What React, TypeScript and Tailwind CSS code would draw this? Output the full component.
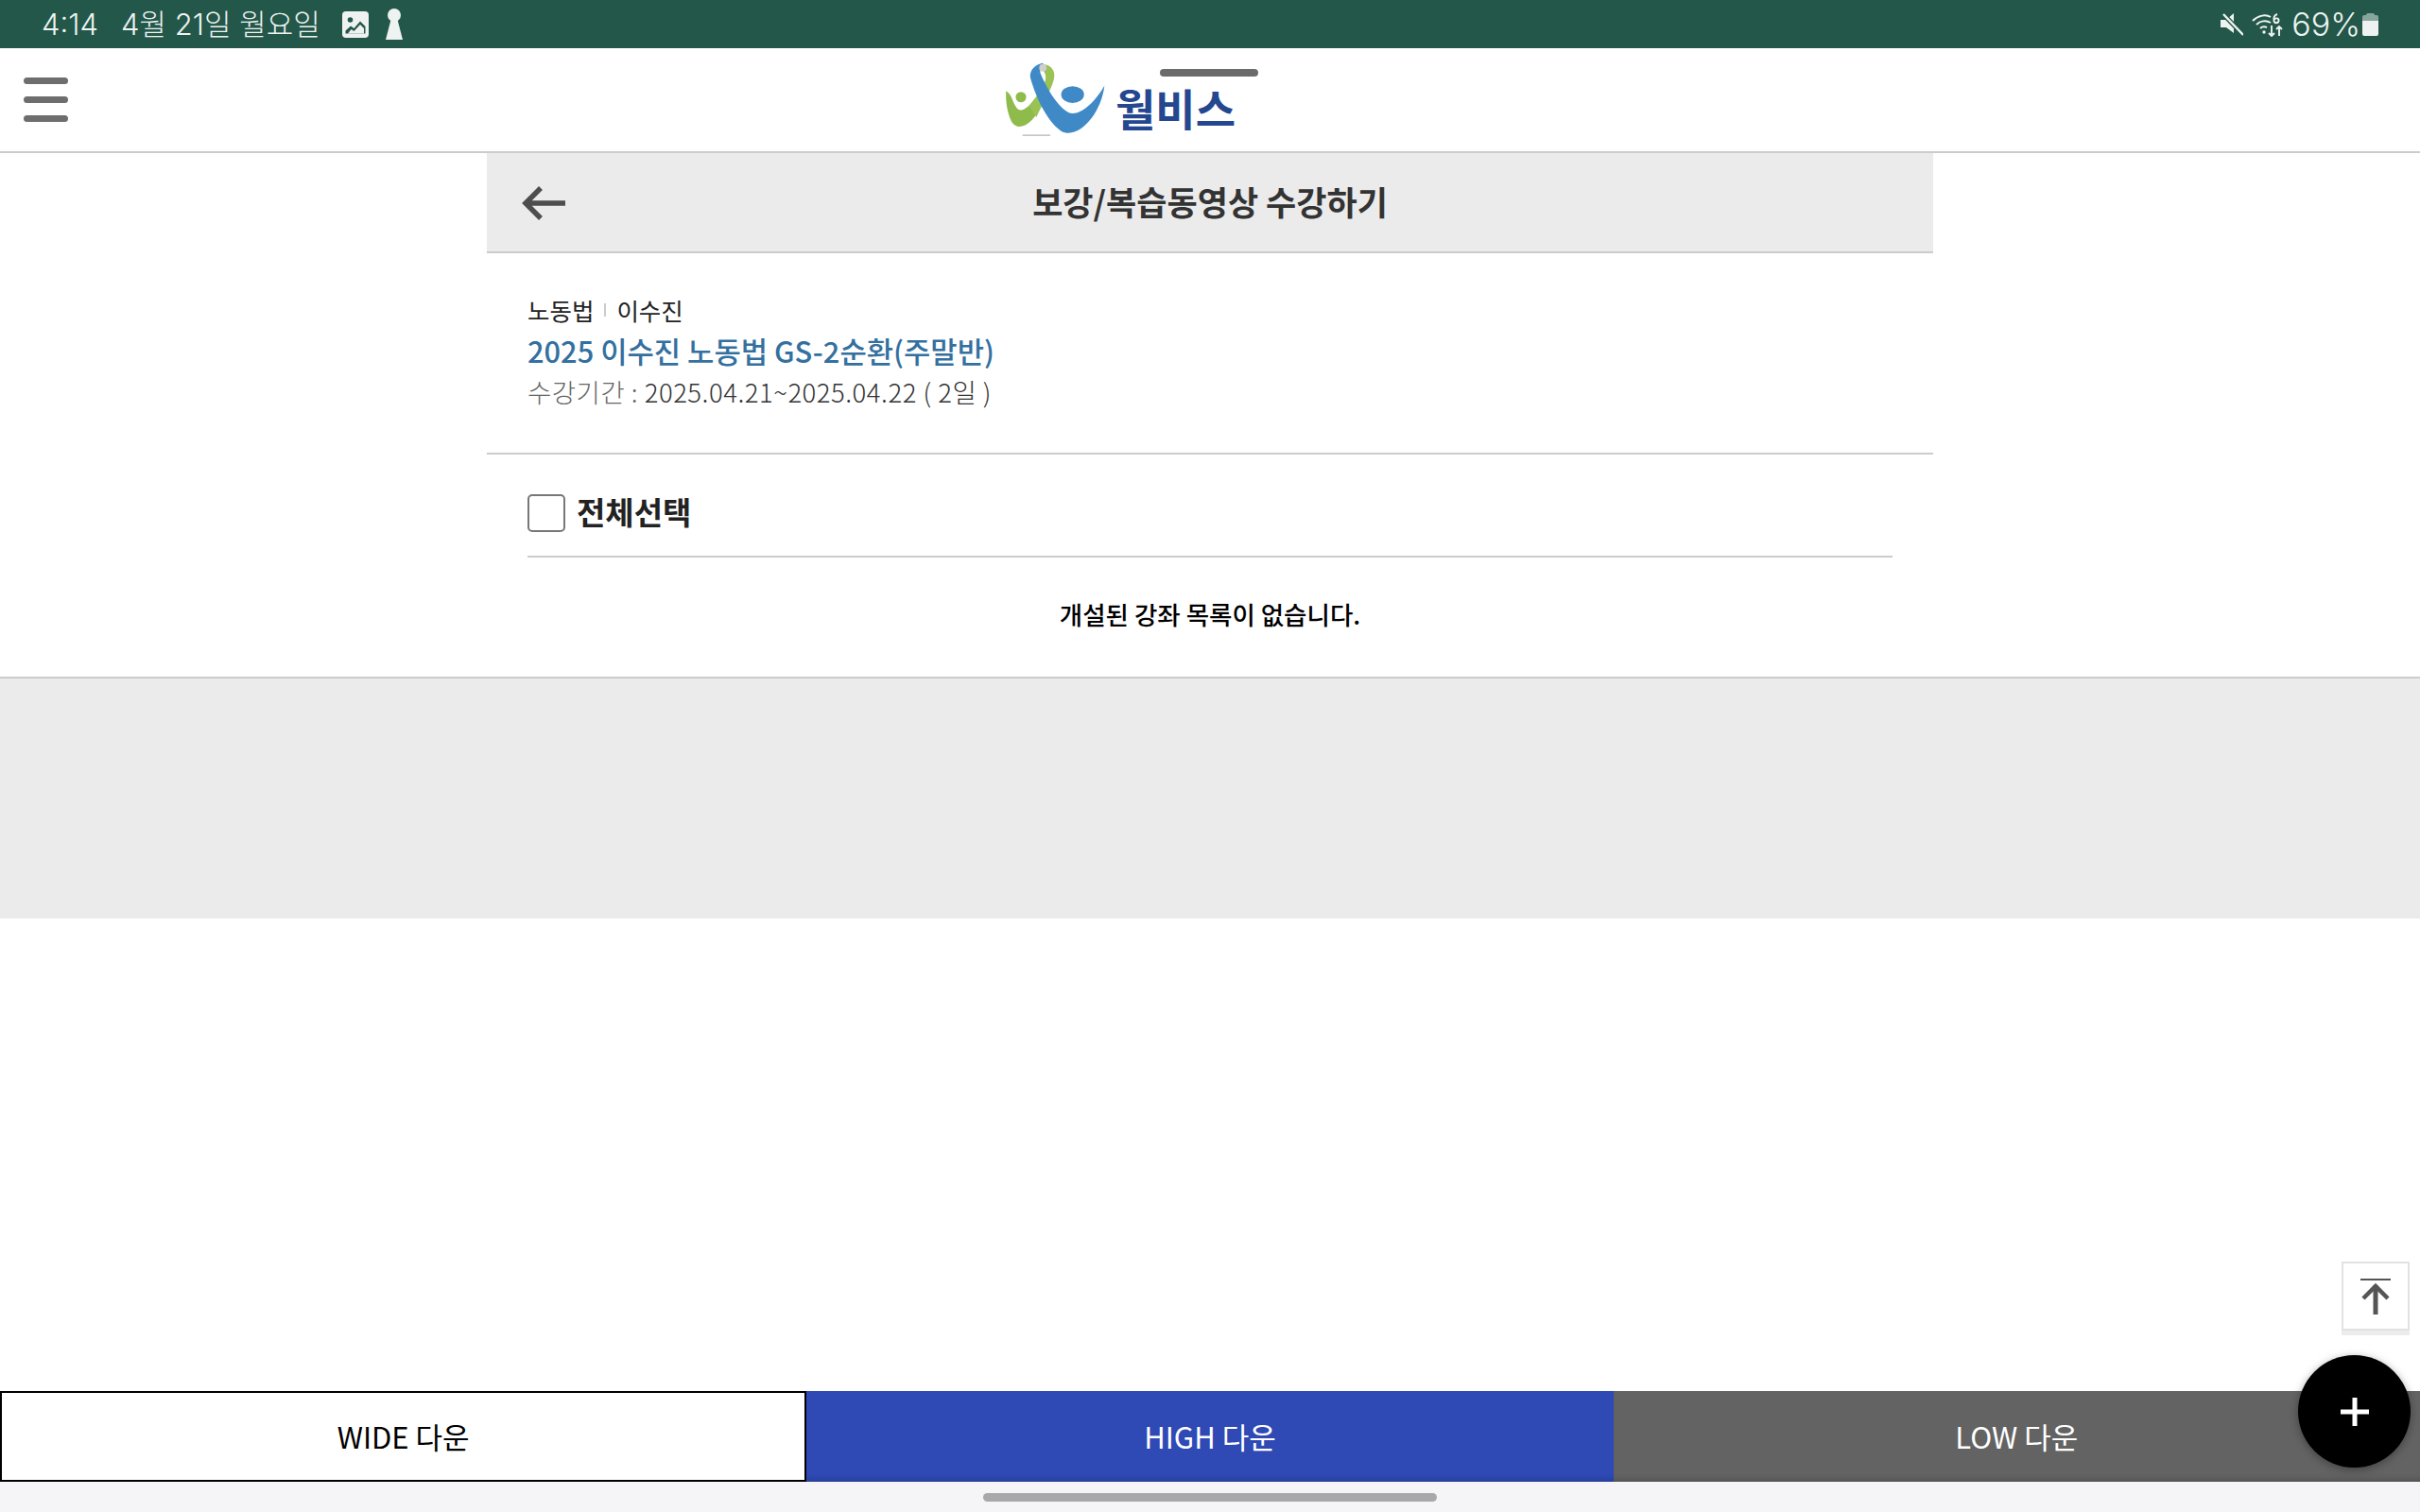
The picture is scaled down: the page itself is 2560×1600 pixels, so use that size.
const kr = "font-['Noto_Sans_CJK_KR',_sans-serif]";

function StatusBar() {
  return (
    <div className="flex h-[51px] items-center bg-[#235749] pl-[44px] pr-[44px] text-[#eef3f1]">
      <span className="font-['Inter',_'Noto_Sans_CJK_KR',_sans-serif] text-[31px] font-light leading-none">4:14</span>
      <span className="ml-[24px] font-['Inter',_'Noto_Sans_CJK_KR',_sans-serif] text-[31px] font-light leading-none">4월 21일 월요일</span>
      {/* gallery */}
      <svg className="ml-[23px]" width="28" height="28" viewBox="0 0 28 28">
        <rect width="28" height="28" rx="4" fill="#eef3f1" />
        <circle cx="8.5" cy="9" r="2.8" fill="#235749" />
        <path d="M3.5 23.5V20.5L9 15.5L12.5 18L19 10.5L24.5 16V23.5Z" fill="#235749" />
        <path d="M6 23.5L9.5 19L12.5 21L19 14L23 18V23.5Z" fill="#eef3f1" />
      </svg>
      {/* keyhole */}
      <svg className="ml-[18px]" width="18" height="33" viewBox="0 0 18 33">
        <circle cx="9" cy="7" r="7" fill="#eef3f1" />
        <path d="M6 10H12L18 33H0Z" fill="#eef3f1" />
      </svg>
      <div className="ml-auto flex items-center">
        {/* mute */}
        <svg width="24" height="24" viewBox="0 0 24 24">
          <path d="M0 7H6L14 0V21L6 15H0Z" fill="#eef3f1" />
          <path d="M2 0L24 23" stroke="#235749" strokeWidth="5" />
          <path d="M3 1L24 23" stroke="#eef3f1" strokeWidth="2.4" />
        </svg>
        {/* wifi with 6 and arrows */}
        <svg className="ml-[9px]" width="33" height="26" viewBox="0 0 33 26" fill="none" stroke="#eef3f1" strokeWidth="2">
          <path d="M1 9C7 3 15 2 20 5" />
          <path d="M5 13C9 9 15 8 20 11" />
          <path d="M9 17C11 15 14 15 16 16" />
          <circle cx="13" cy="21" r="1.7" fill="#eef3f1" stroke="none" />
          <path d="M21 14V25M18 22L21 25L24 22M29 25V15M26 18L29 15L32 18" strokeWidth="1.9" />
          <path d="M27 2C24 3 23 6 23.5 9C24 12 28 12 28.5 9C29 6 25 5.5 23.5 8" strokeWidth="1.9" />
        </svg>
        <span className="ml-[9px] font-['Inter',_sans-serif] text-[34px] font-light leading-none">69%</span>
        <div className="ml-[2px] flex h-[24px] w-[17px] flex-col items-center">
          <div className="h-[2px] w-[9px] rounded-t-sm bg-[#eef3f1]/50" />
          <div className="h-[6px] w-full rounded-t-[2px] bg-[#eef3f1]/50" />
          <div className="w-full flex-1 rounded-b-[2px] bg-[#eef3f1]" />
        </div>
      </div>
    </div>
  );
}

function Logo() {
  return (
    <div className="ml-[990px] flex items-center">
      <svg width="108" height="82" viewBox="90 70 330 250">
        <path d="M97 165C115 175 118 200 128 215C140 240 165 225 190 190L205 225C175 280 135 295 115 265C100 235 95 195 97 165Z" fill="#8fbb4d" />
        <path d="M212 78C240 78 258 98 252 125C245 160 215 205 195 250L172 215C195 180 225 150 225 120C225 105 215 95 205 90Z" fill="#9ac254" />
        <path d="M215 75C190 80 170 100 176 125C190 175 225 260 275 295C330 325 405 240 415 148C395 185 350 240 310 238C270 232 225 150 208 108C205 98 210 85 222 83Z" fill="#3f8ac6" />
        <ellipse cx="312" cy="177" rx="37" ry="27" fill="#3f8ac6" />
        <circle cx="145" cy="185" r="17" fill="#8fbb4d" />
        <circle cx="216" cy="90" r="12" fill="#cfcfcf" />
        <rect x="150" y="306" width="90" height="5" fill="#c5c5c5" />
      </svg>
      <span className={`${kr} ml-[10px] mt-[14px] text-[46px] font-bold leading-none text-[#24478f]`}>월비스</span>
    </div>
  );
}

function Header() {
  return (
    <header className="flex h-[111px] items-center border-b-2 border-[#cccccc] bg-white pl-[25px]">
      <div className="flex w-[47px] flex-col gap-[13px]">
        <div className="h-[7px] rounded-full bg-[#6e6e6e]" />
        <div className="h-[7px] rounded-full bg-[#6e6e6e]" />
        <div className="h-[7px] rounded-full bg-[#6e6e6e]" />
      </div>
      <Logo />
    </header>
  );
}

function Panel() {
  return (
    <section className="mx-auto w-[1530px]">
      <div className="relative flex h-[106px] items-center justify-center border-b-2 border-[#cccccc] bg-[#ebebeb]">
        {/* back arrow */}
        <svg className="absolute left-[37px] top-[35px]" width="46" height="36" viewBox="0 0 46 36" fill="none" stroke="#4d4d4d" strokeWidth="5.5">
          <path d="M46 18H5M20 2L4 18L20 34" />
        </svg>
        <h1 className="pb-[3px] text-[35px] font-bold leading-none text-[#333333]">보강/복습동영상 수강하기</h1>
      </div>

      <div className="h-[213px] border-b-2 border-[#cccccc] pl-[43px] pt-[41px]">
        <div className="flex h-[38px] items-center text-[25.5px] leading-none text-[#222222]">
          노동법
          <span className="mx-[11px] h-[14px] w-[2px] bg-[#cccccc]" />
          이수진
        </div>
        <div className="mt-[2px] text-[30.8px] font-medium leading-[44px] text-[#34709f]">2025 이수진 노동법 GS-2순환(주말반)</div>
        <div className="mt-[3px] text-[27.5px] font-light leading-[36px] tracking-[0.5px] text-[#333333]">
          <span className="text-[#666666]">수강기간 : </span>2025.04.21~2025.04.22 ( 2일 )
        </div>
      </div>

      <div className="mx-[43px] flex h-[109px] items-center gap-[12px] border-b-2 border-[#cccccc] pt-[17px]">
        <div className="h-[40px] w-[40px] rounded-[5px] border-2 border-[#777777] bg-white" />
        <span className="pb-[3px] text-[33px] font-bold leading-none text-[#222222]">전체선택</span>
      </div>
      <p className="flex h-[126px] items-center justify-center pb-[5px] text-[26.5px] font-medium leading-none text-black">
        개설된 강좌 목록이 없습니다.
      </p>
    </section>
  );
}

export default function App() {
  return (
    <div className={`${kr} relative flex h-[1600px] flex-col overflow-hidden bg-white`}>
      <StatusBar />
      <Header />
      <Panel />
      <div className="h-[256px] border-t-2 border-[#cccccc] bg-[#ebebeb]" />

      <div className="flex-1" />

      <div className="grid h-[96px] grid-cols-3 text-[31px] font-normal leading-none">
        <button className="flex items-center justify-center border-2 border-black bg-white pb-[2px] text-black">WIDE 다운</button>
        <button className="flex items-center justify-center bg-[#2f49b5] pb-[2px] text-white shadow-[inset_0_-8px_8px_-8px_rgba(0,0,0,0.3)]">HIGH 다운</button>
        <button className="flex items-center justify-center bg-[#636363] pb-[2px] text-white shadow-[inset_0_-8px_8px_-8px_rgba(0,0,0,0.3)]">LOW 다운</button>
      </div>
      <div className="flex h-[32px] justify-center bg-[#f5f5f7] pt-[12px]">
        <div className="h-[9px] w-[480px] rounded-full bg-[#a8a8a8]" />
      </div>

      {/* multitasking handle */}
      <div className="absolute left-[1227px] top-[73px] h-[8px] w-[104px] rounded-full bg-[#6b6b6b]" />

      {/* scroll to top */}
      <button className="absolute left-[2477px] top-[1335px] flex h-[73px] w-[72px] items-center justify-center border-2 border-[#e2e2e2] bg-white shadow-[0_5px_0_#ececec]">
        <svg width="32" height="38" viewBox="0 0 32 38" fill="none" stroke="#555555">
          <path d="M0 1H32" strokeWidth="2" />
          <path d="M16 38V7" strokeWidth="5" />
          <path d="M3 21L16 8L29 21" strokeWidth="4.5" />
        </svg>
      </button>

      {/* fab */}
      <button className="absolute left-[2431px] top-[1434px] flex h-[119px] w-[119px] items-center justify-center rounded-full bg-black shadow-[0_2px_10px_rgba(0,0,0,0.35)]">
        <svg width="30" height="30" viewBox="0 0 30 30" stroke="#ffffff" strokeWidth="5">
          <path d="M0 15H30M15 0V30" />
        </svg>
      </button>
    </div>
  );
}
